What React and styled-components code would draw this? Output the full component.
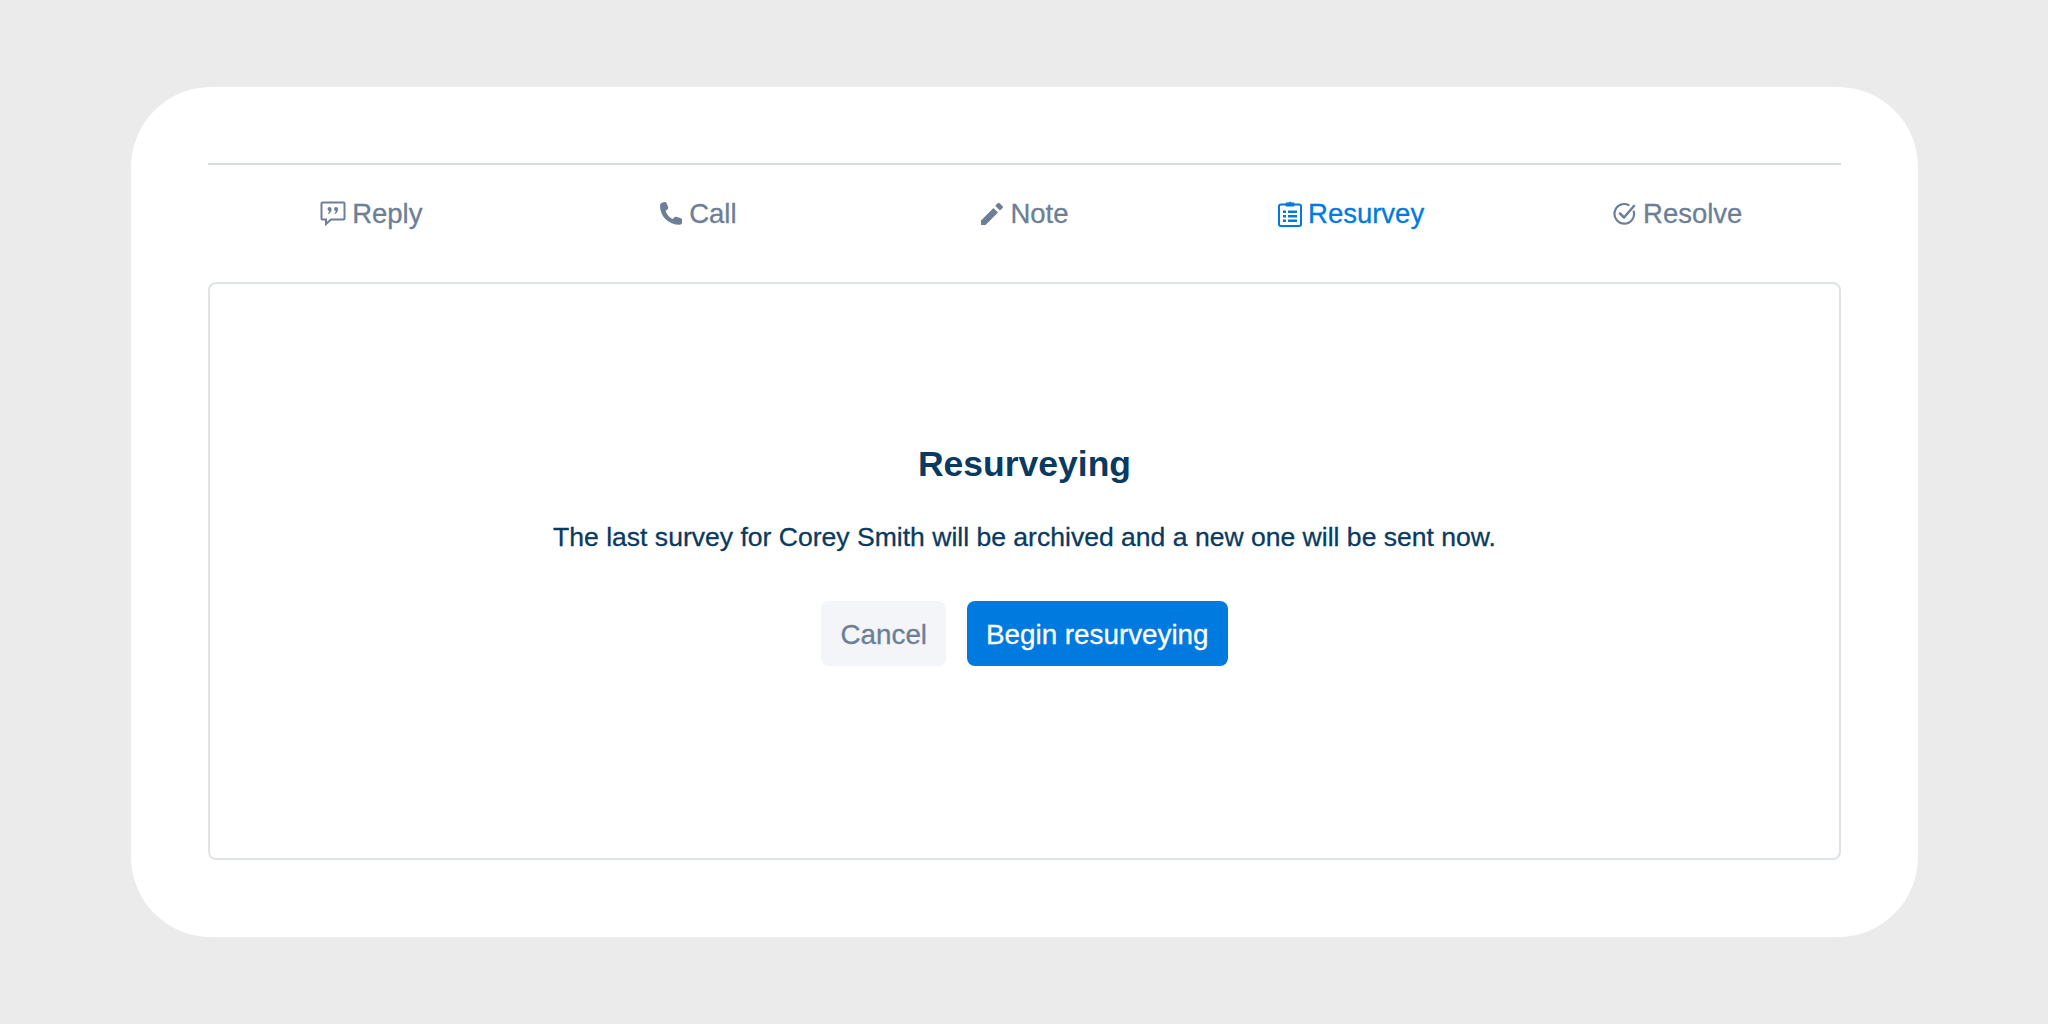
import styled, { createGlobalStyle } from "styled-components";

const Global = createGlobalStyle`
  html, body {
    margin: 0;
    padding: 0;
    background: #ebebeb;
  }
  * {
    box-sizing: border-box;
  }
`;

const Page = styled.div`
  width: 2048px;
  height: 1024px;
  padding: 87px 0 0 131px;
  font-family: "Liberation Sans", Arial, sans-serif;
`;

const Card = styled.div`
  width: 1787px;
  height: 850px;
  padding: 76px 77px 77px;
  background: #fff;
  border-radius: 80px;
  display: flex;
  flex-direction: column;
`;

const Tabs = styled.nav`
  display: grid;
  grid-template-columns: repeat(5, 1fr);
  height: 119px;
  padding-bottom: 19px;
  border-top: 2px solid #d8dde4;
`;

const Tab = styled.div`
  display: flex;
  align-items: center;
  justify-content: center;
  gap: 6px;
  font-size: 27.5px;
  -webkit-text-stroke: 0.3px currentColor;
  color: ${(props) => (props.$active ? "#007ade" : "#6c7f96")};

  svg {
    flex: none;
  }
`;

const Panel = styled.section`
  flex: 1;
  display: flex;
  flex-direction: column;
  align-items: center;
  padding-top: 158px;
  border: 2px solid #dfe3e8;
  border-radius: 8px;
`;

const Title = styled.h2`
  margin: 0;
  font-size: 35.5px;
  line-height: 44px;
  font-weight: 700;
  color: #0a3a5f;
`;

const Message = styled.p`
  margin: 34px 0 0;
  font-size: 26.55px;
  line-height: 34px;
  -webkit-text-stroke: 0.3px currentColor;
  color: #0a3a5f;
`;

const Actions = styled.div`
  display: flex;
  gap: 21px;
  margin-top: 47px;
`;

const Button = styled.button`
  height: 65px;
  padding: 2px 19px 0;
  border: none;
  border-radius: 8px;
  font-family: inherit;
  font-size: 27.8px;
  -webkit-text-stroke: 0.3px currentColor;
  background: ${(props) => (props.$primary ? "#007ade" : "#f4f5f8")};
  color: ${(props) => (props.$primary ? "#fff" : "#6c7f96")};
`;

const ReplyIcon = () => (
  <svg width="26" height="26" viewBox="0 0 26 26" fill="none">
    <path d="M2.500 1.500h21a1 1 0 0 1 1 1v15a1 1 0 0 1-1 1H11l-5 4.500v-4.500H2.500a1 1 0 0 1-1-1v-15a1 1 0 0 1 1-1z" stroke="currentColor" strokeWidth="2" />
    <circle cx="9.500" cy="8" r="2" fill="currentColor" />
    <circle cx="16" cy="8" r="2" fill="currentColor" />
    <path d="M11.500 8c0 2.500-1 4-3 5l-.6-1c1-.6 1.600-1.500 1.600-3zM18 8c0 2.500-1 4-3 5l-.6-1c1-.6 1.600-1.500 1.600-3z" fill="currentColor" />
  </svg>
);

const PhoneIcon = () => (
  <svg width="24" height="26" viewBox="0 0 24 26">
    <path d="M1 4.500C1 3 2 2 3.500 1.500L6 1c.8 0 1.300.4 1.600 1.100l1.600 4.300c.2.700 0 1.300-.5 1.700L6.600 9.900c1.200 3.600 3.700 6.500 7.100 8.200l1.800-1.900c.5-.5 1.100-.6 1.700-.4l4.600 1.500c.8.300 1.200.8 1.200 1.600v2.600c0 1.300-1 2.300-2.300 2.300C9.500 23.800 1 15.500 1 4.500z" fill="currentColor" />
  </svg>
);

const PencilIcon = () => (
  <svg width="24" height="24" viewBox="0 0 24 24">
    <path d="M1 18.500V23h4.500L18 10.500 13.500 6zM22.600 6a1.300 1.300 0 0 0 0-1.800l-3-3a1.300 1.300 0 0 0-1.800 0L15.200 3.800l4.800 4.800z" fill="currentColor" />
  </svg>
);

const ClipboardIcon = () => (
  <svg width="24" height="28" viewBox="0 0 24 28" fill="none">
    <path d="M8 4.500H3a2 2 0 0 0-2 2V24a2 2 0 0 0 2 2h18a2 2 0 0 0 2-2V6.500a2 2 0 0 0-2-2h-5" stroke="currentColor" strokeWidth="2" />
    <path d="M8 3h2.700a1.400 1.400 0 0 1 2.600 0H16v3H8z" fill="currentColor" stroke="currentColor" strokeWidth="1" />
    <path d="M5 10.500h3V13H5zM10 10.500h9V13h-9zM5 15h3v2.500H5zM10 15h9v2.500h-9zM5 19.500h3V22H5zM10 19.500h9V22h-9z" fill="currentColor" />
  </svg>
);

const ResolveIcon = () => (
  <svg width="24" height="24" viewBox="0 0 24 24" fill="none">
    <path d="M20.800 9.500A9.800 9.800 0 1 1 15.500 3" stroke="currentColor" strokeWidth="2.200" strokeLinecap="round" />
    <path d="M7 11.500l4 4 10-11.500" stroke="currentColor" strokeWidth="2.500" strokeLinecap="round" strokeLinejoin="round" />
  </svg>
);

const tabs = [
  { label: "Reply", icon: <ReplyIcon /> },
  { label: "Call", icon: <PhoneIcon /> },
  { label: "Note", icon: <PencilIcon /> },
  { label: "Resurvey", icon: <ClipboardIcon />, active: true },
  { label: "Resolve", icon: <ResolveIcon /> },
];

function App() {
  return (
    <Page>
      <Global />
      <Card>
        <Tabs>
          {tabs.map((tab) => (
            <Tab key={tab.label} $active={tab.active}>
              {tab.icon}
              {tab.label}
            </Tab>
          ))}
        </Tabs>
        <Panel>
          <Title>Resurveying</Title>
          <Message>
            The last survey for Corey Smith will be archived and a new one will
            be sent now.
          </Message>
          <Actions>
            <Button>Cancel</Button>
            <Button $primary>Begin resurveying</Button>
          </Actions>
        </Panel>
      </Card>
    </Page>
  );
}

export default App;
